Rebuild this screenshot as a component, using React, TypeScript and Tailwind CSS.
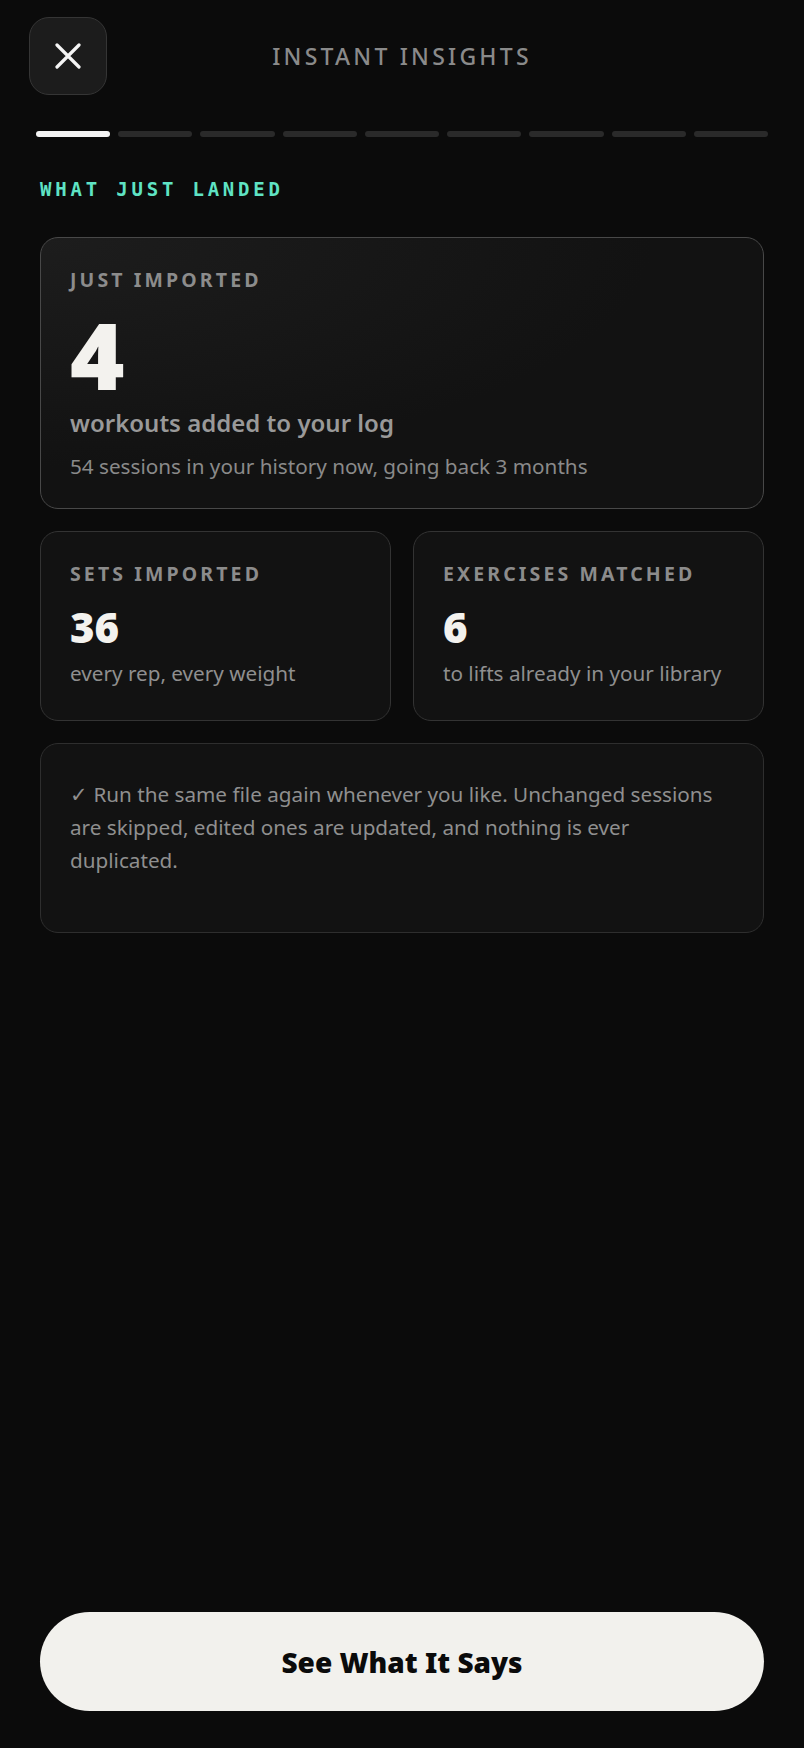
const segments = [true, false, false, false, false, false, false, false, false];

function StatCard({ label, value, note }: { label: string; value: string; note: string }) {
  return (
    <div className="flex-1 rounded-[18px] border border-[#333333] bg-[#121212] px-[29px] pt-[27px] pb-[31px]">
      <div className="text-[19.5px] font-bold uppercase tracking-[0.16em] text-[#8c8c8c]">{label}</div>
      <div className="mt-[18px] text-[42px] font-black leading-none text-[#f3f2ee]">{value}</div>
      <div className="mt-[10px] text-[20.7px] text-[#8f8f8f]">{note}</div>
    </div>
  );
}

export default function App() {
  return (
    <div
      className="flex h-[1748px] flex-col bg-[#0b0b0b]"
      style={{ fontFamily: '"Noto Sans", "Open Sans", sans-serif' }}
    >
      <div className="mt-[17px] grid grid-cols-[78px_1fr_78px] items-center px-[29px]">
        <button className="flex h-[78px] w-[78px] items-center justify-center rounded-[20px] border border-[#353535] bg-[#1c1c1c]">
          <svg width="26" height="26" viewBox="0 0 26 26" fill="none" stroke="#f5f5f5" strokeWidth="3.2" strokeLinecap="round">
            <path d="M2 2 L24 24 M24 2 L2 24" />
          </svg>
        </button>
        <div className="text-center text-[23px] font-medium tracking-[0.14em] text-[#8a8a8a]">INSTANT INSIGHTS</div>
        <div />
      </div>

      <div className="mt-[36px] flex gap-[8px] px-[36px]">
        {segments.map((on, i) => (
          <div key={i} className={on ? 'h-[6px] flex-1 rounded-full bg-[#f4f4f4]' : 'h-[6px] flex-1 rounded-full bg-[#2a2a2a]'} />
        ))}
      </div>

      <div className="flex flex-1 flex-col px-10">
        <div
          className="mt-[38px] text-[19px] font-bold tracking-[0.2em] text-[#5fe3c4]"
          style={{ fontFamily: '"DejaVu Sans Mono", "Liberation Mono", monospace' }}
        >
          WHAT JUST LANDED
        </div>

        <div className="mt-[33px] rounded-[18px] border border-[#484848] bg-[radial-gradient(ellipse_at_top_left,#1d1d1d,#121212_60%)] px-[29px] pt-[27px] pb-[26px]">
          <div className="text-[19.5px] font-bold uppercase tracking-[0.16em] text-[#8c8c8c]">Just imported</div>
          <div className="mt-[14px] text-[93px] font-black leading-none text-[#f3f2ee]">4</div>
          <div className="mt-[4px] text-[24px] font-semibold text-[#999999]">workouts added to your log</div>
          <div className="mt-[10px] text-[20.7px] text-[#8a8a8a]">54 sessions in your history now, going back 3 months</div>
        </div>

        <div className="mt-[22px] flex gap-[22px]">
          <StatCard label="Sets imported" value="36" note="every rep, every weight" />
          <StatCard label="Exercises matched" value="6" note="to lifts already in your library" />
        </div>

        <div className="mt-[22px] h-[190px] rounded-[18px] border border-[#2e2e2e] bg-[#121212] px-[29px] pt-[34px]">
          <p className="text-[20.7px] leading-[33px] text-[#8f8f8f]">
            ✓ Run the same file again whenever you like. Unchanged sessions are skipped, edited ones are updated, and nothing is ever duplicated.
          </p>
        </div>

        <button className="mt-auto mb-[37px] h-[99px] w-full rounded-full bg-[#f2f1ed] text-[28px] font-black text-[#0b0b0b]">
          See What It Says
        </button>
      </div>
    </div>
  );
}
